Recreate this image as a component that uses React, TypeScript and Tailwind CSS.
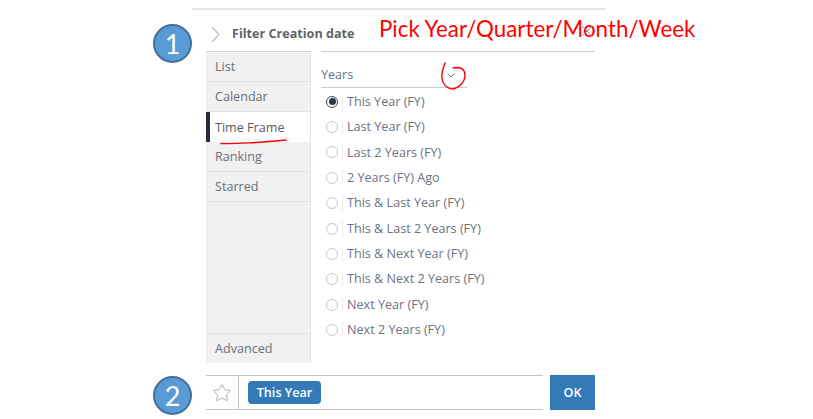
import { Star } from 'lucide-react';

const TABS_TOP = ['List', 'Calendar', 'Time Frame', 'Ranking', 'Starred'];
const OPTIONS = [
  'This Year (FY)',
  'Last Year (FY)',
  'Last 2 Years (FY)',
  '2 Years (FY) Ago',
  'This & Last Year (FY)',
  'This & Last 2 Years (FY)',
  'This & Next Year (FY)',
  'This & Next 2 Years (FY)',
  'Next Year (FY)',
  'Next 2 Years (FY)',
];

function StepBadge({ n, className }: { n: number; className: string }) {
  return (
    <div
      className={`absolute flex h-[39px] w-[39px] items-center justify-center rounded-full border-2 border-[#41719c] bg-[#5b9bd5] text-[27px] leading-none text-white [font-family:Lato,sans-serif] ${className}`}
    >
      {n}
    </div>
  );
}

function RadioRow({ label, checked }: { label: string; checked: boolean }) {
  return (
    <div className="flex h-[25.4px] items-center">
      <span
        className={`flex h-[12px] w-[12px] shrink-0 items-center justify-center rounded-full border ${checked ? 'border-[#3d4654]' : 'border-[#c8c8c8]'}`}
      >
        {checked && <span className="h-[7px] w-[7px] rounded-full bg-[#2c3646]" />}
      </span>
      <span className="ml-[4px] h-[16px] w-px bg-[#ececec]" />
      <span className="ml-[4px] pt-[1px] text-[12.6px] text-[#6b7280]">{label}</span>
    </div>
  );
}

export default function App() {
  return (
    <div className="relative h-[419px] w-[813px] overflow-hidden bg-white [font-family:'Open_Sans',sans-serif]">
      <div className="pt-[8px]">
        <div className="ml-[192px] h-[2px] w-[413px] bg-[#e6e6e6]" />

        <div className="ml-[206px] flex h-[41px] w-[389px] items-center pt-[7px]">
          <svg width="9" height="17" viewBox="0 0 9 17" fill="none" className="ml-[5px]">
            <path d="M1 1l7 7.500L1 16" stroke="#8a8f96" strokeWidth="1" />
          </svg>
          <span className="ml-[12px] text-[12.6px] font-bold text-[#5f6368]">Filter Creation date</span>
          <svg width="12" height="12" viewBox="0 0 12 12" fill="none" className="relative z-10 ml-auto mr-[2px] mb-[6px]">
            <path d="M1 1l10 10M11 1L1 11" stroke="#909090" strokeWidth="1" />
          </svg>
        </div>

        <div className="ml-[206px] flex h-[312px] w-[389px]">
          <div className="flex w-[105px] shrink-0 flex-col border-t border-r border-t-[#cfcfcf] border-r-[#e6e6e6] bg-[#f1f1f1] text-[12.6px] text-[#6b7078]">
            {TABS_TOP.map((tab) =>
              tab === 'Time Frame' ? (
                <div key={tab} className="flex h-[30px] items-center border-l-[4px] border-[#222d3c] bg-white pl-[5px] pt-[2px] text-[#555b63]">
                  {tab}
                </div>
              ) : (
                <div key={tab} className="flex h-[30px] items-center border-b border-[#e2e2e2] pl-[9px] pt-[2px]">
                  {tab}
                </div>
              ),
            )}
            <div className="mt-auto flex h-[30px] items-center border-t border-[#e2e2e2] pl-[9px] pt-[2px]">Advanced</div>
          </div>

          <div className="ml-[10px] flex-1">
            <div className="h-px bg-[#cfcfcf]" />
            <div className="flex h-[36px] w-[146px] items-center justify-between border-b border-[#c9ccd1] pt-[11px] text-[12.6px] text-[#6b7280]">
              <span>Years</span>
              <svg width="8" height="5" viewBox="0 0 8 5" fill="none" className="mr-[12px]">
                <path d="M.5.5L4 4 7.500.5" stroke="#6b7280" strokeWidth="1" />
              </svg>
            </div>
            <div className="pl-[5px] pt-[1px]">
              {OPTIONS.map((o, i) => (
                <RadioRow key={o} label={o} checked={i === 0} />
              ))}
            </div>
          </div>
        </div>

        <div className="ml-[206px] mt-[12px] flex w-[389px] items-stretch">
          <div className="flex h-[35px] w-[337px] items-center border-y border-[#c4c4c4]">
            <div className="flex h-full w-[33px] items-center justify-center border-r border-[#c4c4c4]">
              <Star size={20} strokeWidth={1} className="text-[#9a9a9a]" />
            </div>
            <span className="ml-[9px] flex h-[23px] w-[73px] items-center justify-center rounded-[4px] bg-[#337ab7] pt-[2px] text-[12.6px] font-semibold text-white">
              This Year
            </span>
          </div>
          <div className="ml-[7px] flex h-[35px] w-[45px] items-center justify-center bg-[#337ab7] pt-[2px] text-[12.6px] font-semibold text-white">
            OK
          </div>
        </div>
      </div>

      <StepBadge n={1} className="left-[153px] top-[24px]" />
      <StepBadge n={2} className="left-[153px] top-[376px]" />

      <div className="absolute left-[379px] top-[15px] whitespace-nowrap text-[22.35px] leading-[28px] text-[#ff0000] [font-family:Lato,sans-serif]">
        Pick Year/Quarter/Month/Week
      </div>

      <svg className="absolute left-[438px] top-[62px]" width="32" height="30" viewBox="0 0 32 30" fill="none">
        <path d="M7 1C5 6 3 11 4 17c1 6 6 10 11 10 6-1 12-7 12-14 0-5-3-7-7-7.500-2 0-4 .5-5 .5" stroke="#ff0000" strokeWidth="1.4" strokeLinecap="round" />
      </svg>
      <svg className="absolute left-[220px] top-[138px]" width="68" height="8" viewBox="0 0 68 8" fill="none">
        <path d="M1 5.500c14 .5 24-.5 34-1 10-.5 20-1.500 31-2.500" stroke="#ff0000" strokeWidth="1.4" strokeLinecap="round" />
      </svg>
    </div>
  );
}
